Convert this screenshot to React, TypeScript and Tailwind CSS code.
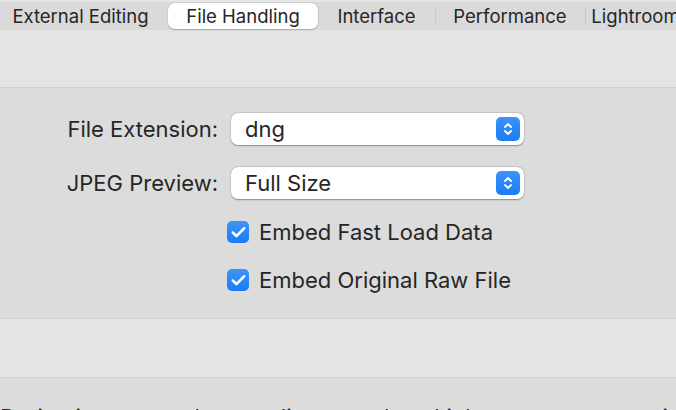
import { Check } from "lucide-react";

const tabs = [
  { label: "External Editing", w: "w-[175px] -ml-[7px]", active: false, sep: false },
  { label: "File Handling", w: "w-[150px]", active: true, sep: false },
  { label: "Interface", w: "w-[117px]", active: false, sep: true },
  { label: "Performance", w: "w-[150px]", active: false, sep: true },
  { label: "Lightroom Sync", w: "w-[150px]", active: false, sep: true },
];

function Stepper() {
  return (
    <div className="flex h-[24px] w-[24px] items-center justify-center rounded-[5px] bg-gradient-to-b from-[#3b93fb] to-[#1a7cf5]">
      <svg width="10" height="16" viewBox="0 0 10 16" fill="none">
        <path d="M2 6l3-3 3 3M2 10l3 3 3-3" stroke="white" strokeWidth="1.8" strokeLinecap="round" strokeLinejoin="round" />
      </svg>
    </div>
  );
}

function Popup({ value }: { value: string }) {
  return (
    <div className="flex h-[32px] w-[293px] items-center justify-between rounded-[7px] bg-white pl-[14px] pr-[4px] shadow-[0_0.5px_1.5px_rgba(0,0,0,0.35),0_0_0_0.5px_rgba(0,0,0,0.08)]">
      <span>{value}</span>
      <Stepper />
    </div>
  );
}

function CheckRow({ label }: { label: string }) {
  return (
    <div className="flex items-center gap-[10px] pl-[227px]">
      <div className="flex h-[22px] w-[22px] items-center justify-center rounded-[5px] bg-gradient-to-b from-[#3b93fb] to-[#1a7cf5]">
        <Check size={17} color="white" strokeWidth={3.5} />
      </div>
      <span>{label}</span>
    </div>
  );
}

export default function App() {
  return (
    <div className="h-[410px] w-[676px] overflow-hidden bg-[#e4e4e4] text-[22px] leading-[26px] text-[#262626] font-['Inter','Liberation_Sans',sans-serif]">
      {/* Tab bar */}
      <div className="h-[2px] bg-[#e6e6e6]" />
      <div className="flex h-[28px] items-center bg-[#dadada] whitespace-nowrap text-[18.5px]">
        {tabs.map((t) => (
          <div key={t.label} className={`relative flex h-full shrink-0 items-center justify-center ${t.w}`}>
            {t.sep && <div className="absolute left-0 top-[7px] h-[14px] w-px bg-[#c6c6c6]" />}
            {t.active ? (
              <div className="flex h-[26px] w-full items-center justify-center rounded-[7px] bg-white shadow-[0_0.5px_1.5px_rgba(0,0,0,0.25)]">
                {t.label}
              </div>
            ) : (
              <span>{t.label}</span>
            )}
          </div>
        ))}
      </div>

      {/* Empty top panel */}
      <div className="h-[58px] border-b border-[#d0d0d0] bg-[#e4e4e4]" />

      {/* Form */}
      <div className="flex h-[231px] flex-col border-b border-[#d2d2d2] bg-[#dcdcdc] pt-[25px]">
        <div className="flex items-center">
          <div className="w-[218px] text-right">File Extension:</div>
          <div className="ml-[13px]">
            <Popup value="dng" />
          </div>
        </div>
        <div className="mt-[22px] flex items-center">
          <div className="w-[218px] text-right">JPEG Preview:</div>
          <div className="ml-[13px]">
            <Popup value="Full Size" />
          </div>
        </div>
        <div className="mt-[20px]">
          <CheckRow label="Embed Fast Load Data" />
        </div>
        <div className="mt-[22px]">
          <CheckRow label="Embed Original Raw File" />
        </div>
      </div>

      {/* Empty panel */}
      <div className="h-[59px] border-b border-[#d0d0d0] bg-[#e4e4e4]" />

      {/* Bottom text */}
      <div className="bg-[#dddddd] pt-[26px] whitespace-nowrap">
        During import or when reading metadata, Lightroom can recognize dot
      </div>
    </div>
  );
}
